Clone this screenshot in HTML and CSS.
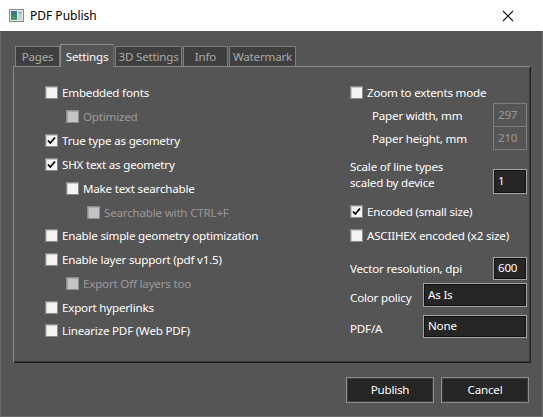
FILE: index.html
```html
<!DOCTYPE html>
<html>
<head>
<meta charset="utf-8">
<link rel="stylesheet" href="styles.css">
</head>
<body>
<div class="window">
  <div class="titlebar">
    <svg class="appicon" width="16" height="14" viewBox="0 0 16 14">
      <defs>
        <linearGradient id="g1" x1="0" y1="0" x2="0" y2="1">
          <stop offset="0" stop-color="#2f6f8f"/>
          <stop offset="1" stop-color="#4aa060"/>
        </linearGradient>
      </defs>
      <rect x="0.5" y="0.5" width="14" height="12" fill="#e8e8e8" stroke="#8a8a8a"/>
      <rect x="2" y="2" width="6" height="9" fill="url(#g1)"/>
      <rect x="9" y="2" width="4" height="9" fill="#c8d0d8"/>
      <line x1="9.5" y1="4" x2="12.5" y2="4" stroke="#7a8a9a"/>
    </svg>
    <span class="title">PDF Publish</span>
    <svg class="close" width="12" height="12" viewBox="0 0 12 12">
      <path d="M1 1 L11 11 M11 1 L1 11" stroke="#111" stroke-width="1.1" fill="none"/>
    </svg>
  </div>
  <div class="client">
    <div class="tabs">
      <div class="tab t-pages">Pages</div>
      <div class="tab active t-settings">Settings</div>
      <div class="tab t-3d">3D Settings</div>
      <div class="tab t-info">Info</div>
      <div class="tab t-water">Watermark</div>
    </div>
    <div class="panel">
      <div class="col left">
        <div class="row r1"><span class="cb"></span><span>Embedded fonts</span></div>
        <div class="row r2 ind1 dis"><span class="cb"></span><span>Optimized</span></div>
        <div class="row"><span class="cb on"><svg viewBox="0 0 11 11"><path d="M2 5.5 L4.3 8 L9 2.5" stroke="#000" stroke-width="1.8" fill="none"/></svg></span><span>True type as geometry</span></div>
        <div class="row"><span class="cb on"><svg viewBox="0 0 11 11"><path d="M2 5.5 L4.3 8 L9 2.5" stroke="#000" stroke-width="1.8" fill="none"/></svg></span><span>SHX text as geometry</span></div>
        <div class="row ind1"><span class="cb"></span><span>Make text searchable</span></div>
        <div class="row ind2 dis"><span class="cb"></span><span>Searchable with CTRL+F</span></div>
        <div class="row"><span class="cb"></span><span>Enable simple geometry optimization</span></div>
        <div class="row"><span class="cb"></span><span>Enable layer support (pdf v1.5)</span></div>
        <div class="row ind1 dis"><span class="cb"></span><span>Export Off layers too</span></div>
        <div class="row"><span class="cb"></span><span>Export hyperlinks</span></div>
        <div class="row"><span class="cb"></span><span>Linearize PDF (Web PDF)</span></div>
      </div>
      <div class="col right">
        <div class="row zoomrow"><span class="cb"></span><span>Zoom to extents mode</span></div>
        <div class="field paper"><span class="lbl">Paper width, mm</span><span class="inp small disabled">297</span></div>
        <div class="field paper second"><span class="lbl">Paper height, mm</span><span class="inp small disabled">210</span></div>
        <div class="field scale"><span class="lbl two">Scale of line types<br>scaled by device</span><span class="inp small tall">1</span></div>
        <div class="row enc"><span class="cb on"><svg viewBox="0 0 11 11"><path d="M2 5.5 L4.3 8 L9 2.5" stroke="#000" stroke-width="1.8" fill="none"/></svg></span><span>Encoded (small size)</span></div>
        <div class="row asc"><span class="cb"></span><span>ASCIIHEX encoded (x2 size)</span></div>
        <div class="field vec"><span class="lbl">Vector resolution, dpi</span><span class="inp small">600</span></div>
        <div class="field color"><span class="lbl low">Color policy</span><span class="inp wide">As Is</span></div>
        <div class="field pdfa"><span class="lbl low">PDF/A</span><span class="inp wide">None</span></div>
      </div>
    </div>
    <div class="buttons">
      <div class="btn">Publish</div>
      <div class="btn">Cancel</div>
    </div>
  </div>
</div>
</body>
</html>
```
FILE: styles.css
```css
html, body {
  margin: 0;
  padding: 0;
  background: #555555;
}
body {
  font-family: "Noto Sans", "Open Sans", sans-serif;
  font-size: 11.6px;
  letter-spacing: -0.2px;
}
.window {
  width: 543px;
  height: 417px;
  display: flex;
  flex-direction: column;
  overflow: hidden;
}
.titlebar {
  height: 31px;
  background: #ffffff;
  display: flex;
  align-items: center;
  flex-shrink: 0;
  position: relative;
}
.appicon {
  margin-left: 9px;
  margin-top: 1px;
}
.title {
  margin-left: 5px;
  color: #000;
  font-size: 12px;
  letter-spacing: 0;
}
.close {
  margin-left: auto;
  margin-right: 29px;
}
.client {
  flex: 1;
  background: #555555;
  border-left: 1px solid #6c6c6c;
  border-right: 1px solid #6c6c6c;
  border-bottom: 1px solid #6c6c6c;
  padding: 13px 0 0 12px;
  display: flex;
  flex-direction: column;
}
.tabs {
  display: flex;
  align-items: flex-end;
  height: 22px;
  padding-left: 2px;
  position: relative;
  z-index: 2;
}
.tab {
  box-sizing: border-box;
  height: 20px;
  background: #3f3f3f;
  color: #a8a8a8;
  border: 1px solid #7e7e7e;
  border-bottom: none;
  display: flex;
  align-items: center;
  justify-content: center;
  margin-right: 1px;
}
.tab.active {
  height: 23px;
  margin-bottom: -1px;
  background: #555555;
  color: #ffffff;
  border-color: #8e8e8e;
  border-right-color: #6a6a6a;
}
.t-pages { width: 45px; }
.t-settings { width: 54px; margin-left: -1px; }
.t-3d { width: 67px; }
.t-info { width: 45px; }
.t-water { width: 67px; }
.panel {
  box-sizing: border-box;
  width: 518px;
  height: 297px;
  border-top: 1px solid #8a8a8a;
  border-left: 1px solid #8a8a8a;
  border-right: 1px solid #222;
  border-bottom: 1px solid #1c1c1c;
  box-shadow: inset -1px -1px 0 #3a3a3a;
  display: flex;
  padding-top: 14px;
  color: #ffffff;
}
.col {
  display: flex;
  flex-direction: column;
}
.left {
  width: 305px;
  padding-left: 31px;
}
.right {
  width: 177px;
  overflow: hidden;
}
.row {
  display: flex;
  align-items: center;
  height: 23.75px;
  white-space: nowrap;
}
.row.r1 { height: 23px; }
.row.r2 { height: 25px; }
.ind1 { padding-left: 21px; }
.ind2 { padding-left: 42px; }
.cb {
  box-sizing: border-box;
  width: 13px;
  height: 13px;
  background: #f4f4f4;
  border: 1px solid #8a8a8a;
  box-shadow: inset 1px 1px 0 #c8c8c8;
  margin-right: 4px;
  flex-shrink: 0;
  display: flex;
  align-items: center;
  justify-content: center;
}
.cb svg {
  width: 11px;
  height: 11px;
}
.dis { color: #9a9a9a; }
.dis .cb {
  background: #c4c4c4;
  border-color: #8e8e8e;
  box-shadow: inset 1px 1px 0 #a8a8a8;
}
.zoomrow { height: 22px; }
.field {
  display: flex;
  align-items: center;
  white-space: nowrap;
}
.lbl {
  flex: 1;
}
.paper .lbl { padding-left: 22px; }
.paper.second { margin-top: -1px; }
.inp {
  box-sizing: border-box;
  height: 24px;
  background: #262626;
  border: 1px solid #a4a4a4;
  box-shadow: inset 1px 1px 0 #111, inset -1px -1px 0 #111;
  color: #ffffff;
  display: flex;
  align-items: center;
  padding-left: 4px;
  padding-bottom: 2px;
  flex-shrink: 0;
}
.inp.small { width: 34px; }
.inp.wide { width: 104px; }
.inp.disabled {
  background: #555555;
  border-color: #7c7c7c;
  box-shadow: none;
  color: #9a9a9a;
}
.scale {
  margin-top: 9px;
  align-items: flex-start;
}
.lbl.two { line-height: 16px; }
.inp.tall {
  height: 25px;
  margin-top: 10px;
}
.enc { margin-top: 6px; height: 23px; }
.asc { height: 24px; }
.vec { margin-top: 10px; }
.vec .inp { height: 23px; }
.color { margin-top: 3px; }
.pdfa { margin-top: 8px; }
.pdfa .inp { height: 23px; }
.lbl.low { padding-top: 4px; }
.buttons {
  display: flex;
  justify-content: flex-end;
  gap: 7px;
  margin-top: 14px;
  padding-right: 13px;
}
.btn {
  box-sizing: border-box;
  width: 88px;
  height: 26px;
  background: #262626;
  border: 1px solid #8c8c8c;
  box-shadow: inset 0 0 0 1px #3c3c3c;
  color: #ffffff;
  display: flex;
  align-items: center;
  justify-content: center;
  padding-bottom: 1px;
}
```
